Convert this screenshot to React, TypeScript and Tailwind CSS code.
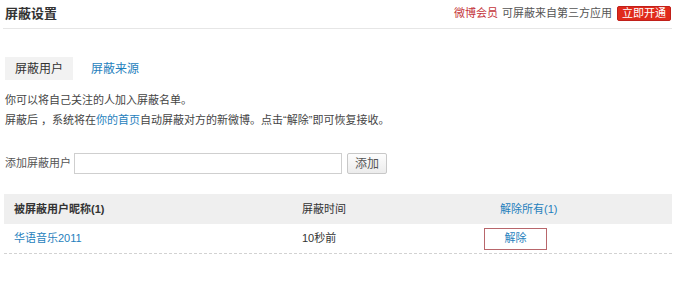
export default function App() {
  const font = { fontFamily: '"Liberation Sans", "Noto Sans CJK SC", sans-serif' };
  return (
    <div className="w-[690px] h-[308px] bg-white text-[11px] text-[#333]" style={font}>
      <div className="ml-[3px] mr-[18px]">
        {/* header */}
        <div className="flex items-center justify-between h-[29px] border-b border-[#e6e6e6] pl-[2px] pr-[1px]">
          <h1 className="text-[13px] font-bold text-[#333] leading-none -mt-[2px]">屏蔽设置</h1>
          <div className="flex items-center -mt-[2px]">
            <span className="text-[#c4343a]">微博会员</span>
            <span className="ml-[4px] text-[#555]">可屏蔽来自第三方应用</span>
            <span className="ml-[5px] h-[15px] px-[4px] flex items-center bg-[#e02a1b] border border-[#c0201a] text-white text-[11px] rounded-[2px]">
              立即开通
            </span>
          </div>
        </div>

        {/* tabs */}
        <div className="flex items-center mt-[28px] pl-[2px]">
          <div className="h-[23px] w-[68px] flex items-center justify-center bg-[#f2f2f2] text-[12px] text-[#333]">
            屏蔽用户
          </div>
          <div className="ml-[18px] text-[12px] text-[#1f7fbd]">屏蔽来源</div>
        </div>

        {/* description */}
        <div className="mt-[10px] pl-[2px] leading-[20px] text-[#444]">
          <p>你可以将自己关注的人加入屏蔽名单。</p>
          <p>
            屏蔽后 ，系统将在<span className="text-[#1f7fbd]">你的首页</span>自动屏蔽对方的新微博。点击“解除”即可恢复接收。
          </p>
        </div>

        {/* add */}
        <div className="flex items-center mt-[23px] pl-[2px]">
          <span className="text-[#555]">添加屏蔽用户</span>
          <input className="ml-[3px] w-[268px] h-[21px] border border-[#cfcfcf] outline-none px-1" />
          <button className="ml-[5px] w-[40px] h-[21px] border border-[#c8c8c8] rounded-[2px] bg-gradient-to-b from-[#fdfdfd] to-[#ececec] text-[12px] text-[#555]">
            添加
          </button>
        </div>

        {/* table */}
        <div className="mt-[20px] ml-[1px]">
          <div className="flex items-center h-[30px] bg-[#efefef]">
            <div className="w-[288px] pl-[10px] font-bold text-[#333]">被屏蔽用户昵称(1)</div>
            <div className="w-[192px] pl-[10px] text-[#333]">屏蔽时间</div>
            <div className="pl-[16px] text-[#1f7fbd]">解除所有(1)</div>
          </div>
          <div className="flex items-center h-[30px] border-b border-dashed border-[#d2d2d2]">
            <div className="w-[288px] pl-[10px] text-[#1f7fbd]">华语音乐2011</div>
            <div className="w-[192px] pl-[10px] text-[#333]">10秒前</div>
            <div className="w-[63px] h-[22px] flex items-center justify-center border border-[#b8666b] text-[#1f7fbd]">
              解除
            </div>
          </div>
        </div>
      </div>
    </div>
  );
}
